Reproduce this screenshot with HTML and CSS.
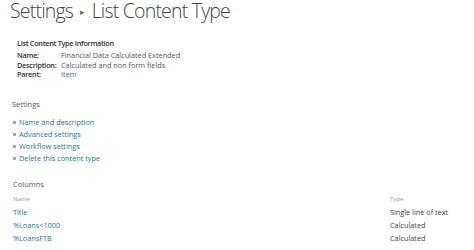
FILE: index.html
```html
<!DOCTYPE html>
<html>
<head>
<meta charset="utf-8">
<link rel="stylesheet" href="styles.css">
</head>
<body>
<div class="page">
  <h1 class="title">Settings <span class="sep">▸</span> List Content Type</h1>

  <div class="info">
    <div class="info-head">List Content Type Information</div>
    <div class="info-grid">
      <div class="lbl">Name:</div><div class="val">Financial Data Calculated Extended</div>
      <div class="lbl">Description:</div><div class="val">Calculated and non form fields</div>
      <div class="lbl">Parent:</div><div class="val"><a class="link">Item</a></div>
    </div>
  </div>

  <div class="section settings">
    <div class="sec-title">Settings</div>
    <ul class="links">
      <li><a class="link">Name and description</a></li>
      <li><a class="link">Advanced settings</a></li>
      <li><a class="link">Workflow settings</a></li>
      <li><a class="link">Delete this content type</a></li>
    </ul>
  </div>

  <div class="section columns">
    <div class="sec-title">Columns</div>
    <div class="col-grid">
      <div class="hdr">Name</div><div class="hdr">Type</div>
      <div class="cell"><a class="link">Title</a></div><div class="cell">Single line of text</div>
      <div class="cell"><a class="link">%Loans&lt;1000</a></div><div class="cell">Calculated</div>
      <div class="cell"><a class="link">%LoansFTB</a></div><div class="cell">Calculated</div>
    </div>
  </div>
</div>
</body>
</html>
```
FILE: styles.css
```css
html, body {
  margin: 0;
  padding: 0;
  background: #fff;
}
body {
  font-family: "Open Sans", "Noto Sans", sans-serif;
  color: #444;
  width: 474px;
  height: 250px;
  overflow: hidden;
}
.page {
  padding: 0 0 0 10px;
}
.title {
  margin: 0;
  font-weight: 300;
  font-size: 19.5px;
  line-height: 21px;
  color: #444;
  letter-spacing: -0.8px;
}
.sep {
  display: inline-block;
  font-size: 9px;
  vertical-align: 3px;
  color: #666;
  letter-spacing: 0;
  margin: 0 2px 0 3px;
}
.info {
  margin-top: 16px;
  padding-left: 7px;
  font-size: 7.3px;
}
.info-head {
  font-weight: 600;
  color: #333;
  line-height: 10px;
  letter-spacing: -0.3px;
}
.info-grid {
  margin-top: 3px;
  display: grid;
  grid-template-columns: 44px auto;
  line-height: 9.7px;
}
.lbl {
  font-weight: 600;
  color: #333;
  letter-spacing: -0.25px;
}
.val {
  color: #555;
}
.link {
  color: #1c7592;
  text-decoration: none;
}
.section {
  margin-top: 19px;
  padding-left: 2px;
}
.sec-title {
  font-size: 7.5px;
  color: #555;
  line-height: 10px;
}
.links {
  list-style: none;
  margin: 7px 0 0 0;
  padding: 0 0 0 1px;
  font-size: 7.3px;
  line-height: 12px;
}
.links li {
  display: flex;
  align-items: center;
  gap: 3px;
}
.links li::before {
  content: "";
  width: 3px;
  height: 3px;
  background: #a8a8a8;
}
.columns {
  margin-top: 15px;
  padding-left: 3px;
}
.col-grid {
  margin-top: 4px;
  display: grid;
  grid-template-columns: 1fr 84px;
  font-size: 7.3px;
  line-height: 13px;
}
.hdr {
  color: #999;
  font-size: 6px;
}
.cell {
  color: #444;
}
```
